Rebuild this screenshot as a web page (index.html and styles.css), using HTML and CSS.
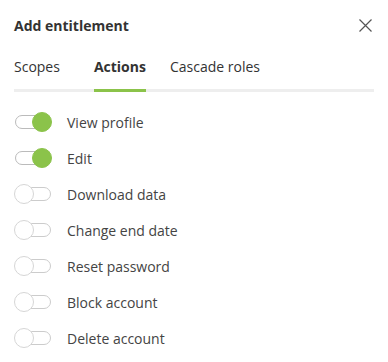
FILE: index.html
```html
<!DOCTYPE html>
<html>
<head>
<meta charset="utf-8">
<link rel="stylesheet" href="styles.css">
</head>
<body>
<div class="panel">
  <div class="header">
    <h1 class="title">Add entitlement</h1>
    <button class="close" aria-label="Close">
      <svg width="13" height="13" viewBox="0 0 13 13"><path d="M0.5 0.5 L12.5 12.5 M12.5 0.5 L0.5 12.5" stroke="#555" stroke-width="1.2" fill="none"/></svg>
    </button>
  </div>
  <div class="tabs">
    <div class="tab tab-scopes">Scopes</div>
    <div class="tab tab-actions active">Actions</div>
    <div class="tab">Cascade roles</div>
  </div>
  <ul class="list">
    <li class="row"><span class="toggle on"><span class="knob"></span></span><span class="label">View profile</span></li>
    <li class="row"><span class="toggle on"><span class="knob"></span></span><span class="label">Edit</span></li>
    <li class="row"><span class="toggle"><span class="knob"></span></span><span class="label">Download data</span></li>
    <li class="row"><span class="toggle"><span class="knob"></span></span><span class="label">Change end date</span></li>
    <li class="row"><span class="toggle"><span class="knob"></span></span><span class="label">Reset password</span></li>
    <li class="row"><span class="toggle"><span class="knob"></span></span><span class="label">Block account</span></li>
    <li class="row"><span class="toggle"><span class="knob"></span></span><span class="label">Delete account</span></li>
  </ul>
</div>
</body>
</html>
```
FILE: styles.css
```css
* { box-sizing: border-box; }
html, body { margin: 0; padding: 0; background: #fff; }
body { font-family: "Open Sans", sans-serif; color: #333; }
.panel { padding: 0 14px; width: 388px; }
.header { display: flex; align-items: center; justify-content: space-between; height: 49px; padding-top: 1px; }
.title { margin: 0; font-size: 14px; font-weight: 700; color: #333; }
.close { border: 0; background: none; padding: 0; margin-right: 2px; width: 13px; height: 13px; display: flex; }
.tabs { display: flex; border-bottom: 3px solid #eee; }
.tab { font-size: 14px; color: #333; padding: 8px 0 12px; margin-bottom: -3px; border-bottom: 3px solid transparent; line-height: 20px; }
.tab-scopes { margin-right: 34px; }
.tab-actions { margin-right: 24px; }
.tab.active { font-weight: 700; border-bottom-color: #8bc34a; }
.list { list-style: none; margin: 19px 0 0; padding: 0; display: flex; flex-direction: column; gap: 14px; }
.row { display: flex; align-items: center; height: 22px; }
.toggle { position: relative; width: 36px; height: 14px; border: 1px solid #ccc; border-radius: 7px; margin-left: 1px; flex: none; }
.knob { position: absolute; top: -4px; left: -2px; width: 20px; height: 20px; border-radius: 50%; background: #fff; border: 1px solid #d6d6d6; }
.toggle.on { border-color: #bbb; }
.toggle.on .knob { left: auto; right: -2px; background: #8bc34a; border-color: #8bc34a; }
.label { margin-left: 16px; font-size: 14px; color: #444; }
```
